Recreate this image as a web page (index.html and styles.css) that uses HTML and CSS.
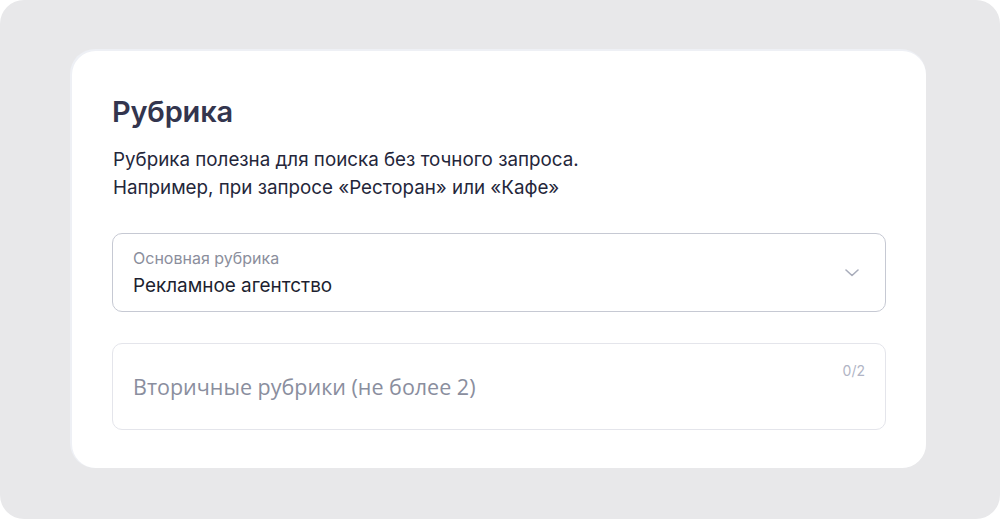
FILE: index.html
```html
<!DOCTYPE html>
<html lang="ru">
<head>
<meta charset="utf-8">
<link rel="stylesheet" href="styles.css">
</head>
<body>
<div class="frame">
  <section class="card">
    <h1 class="title">Рубрика</h1>
    <p class="desc">Рубрика полезна для поиска без точного запроса.<br>Например, при запросе «Ресторан» или «Кафе»</p>
    <div class="select">
      <div class="select-text">
        <div class="select-label">Основная рубрика</div>
        <div class="select-value">Рекламное агентство</div>
      </div>
      <svg class="chevron" width="14" height="8" viewBox="0 0 14 8"><path d="M1 1l6 5.5L13 1" fill="none" stroke="#a9adbb" stroke-width="1.6" stroke-linecap="round" stroke-linejoin="round"/></svg>
    </div>
    <div class="multi">
      <div class="multi-placeholder">Вторичные рубрики (не более 2)</div>
      <div class="counter">0/2</div>
    </div>
  </section>
</div>
</body>
</html>
```
FILE: styles.css
```css
html, body {
  margin: 0;
  padding: 0;
  background: #ffffff;
}
body {
  width: 1000px;
  height: 519px;
  overflow: hidden;
  font-family: Inter, "Noto Sans", sans-serif;
}
.frame {
  box-sizing: border-box;
  width: 1000px;
  height: 519px;
  background: #e8e8ea;
  border-radius: 24px;
  padding: 51px 74px 51px 72px;
}
.card {
  box-sizing: border-box;
  height: 417px;
  background: #ffffff;
  border-radius: 24px;
  box-shadow: -1px -1px 0 1px #eef0f5;
  padding: 41px 40px 0 40px;
}
.title {
  margin: 0;
  font-size: 29px;
  line-height: 40px;
  font-weight: 600;
  color: #33354e;
  letter-spacing: -0.2px;
}
.desc {
  margin: 14px 0 0 1px;
  font-size: 18.8px;
  line-height: 28px;
  color: #24263a;
}
.select {
  box-sizing: border-box;
  margin-top: 31px;
  height: 79px;
  border: 1px solid #c6c9d3;
  border-radius: 10px;
  display: flex;
  align-items: center;
  justify-content: space-between;
  padding: 0 26px 0 20px;
}
.select-label {
  font-size: 16px;
  line-height: 20px;
  color: #8b8e9c;
}
.select-value {
  margin-top: 6px;
  font-size: 18.9px;
  line-height: 24px;
  color: #1d1f30;
}
.multi {
  box-sizing: border-box;
  margin-top: 31px;
  height: 87px;
  border: 1px solid #e4e5eb;
  border-radius: 10px;
  display: flex;
  align-items: center;
  justify-content: space-between;
  padding: 0 20px;
}
.multi-placeholder {
  font-family: "Open Sans", Inter, sans-serif;
  font-size: 21.5px;
  color: #8a8e9e;
}
.counter {
  align-self: flex-start;
  margin-top: 18px;
  font-size: 14px;
  color: #b1b5c5;
}
```
